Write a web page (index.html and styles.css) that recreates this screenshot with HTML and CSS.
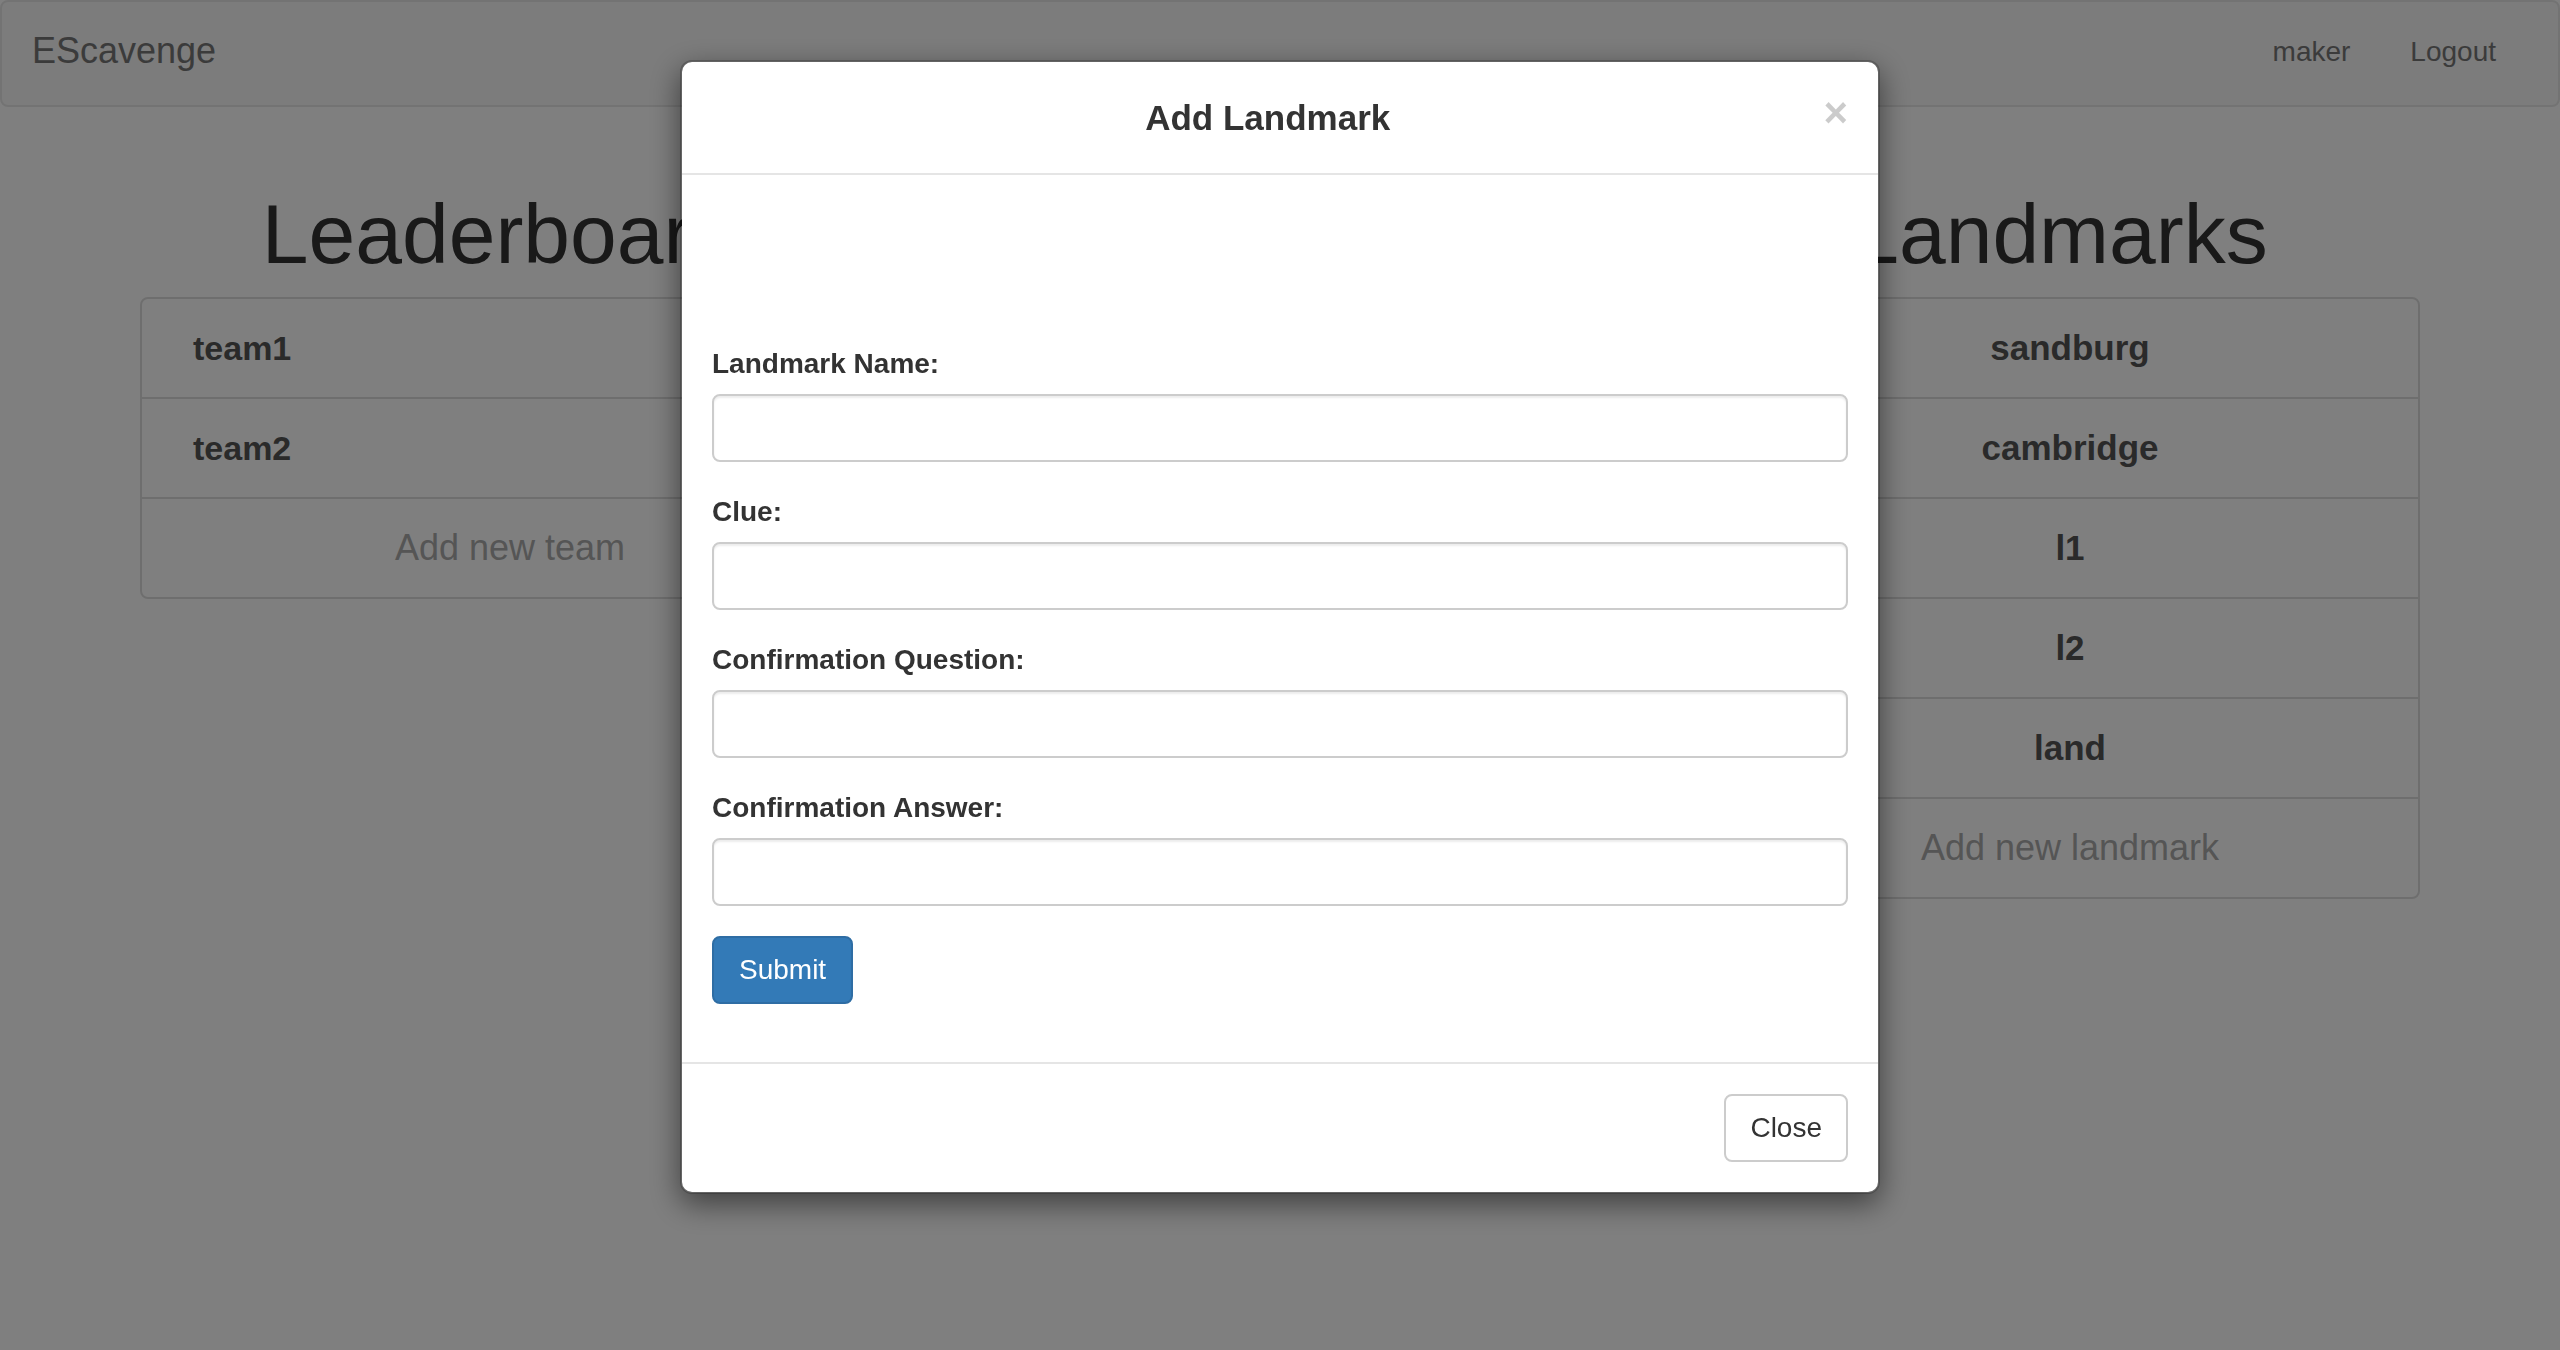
FILE: index.html
```html
<!DOCTYPE html>
<html lang="en">
<head>
<meta charset="utf-8">
<title>EScavenge</title>
<link rel="stylesheet" href="styles.css">
</head>
<body>
<nav class="navbar">
  <div class="brand">EScavenge</div>
  <ul class="nav-right">
    <li class="nav-link">maker</li>
    <li class="nav-link">Logout</li>
  </ul>
</nav>

<div class="container">
  <section class="col col-left">
    <h1 class="heading">Leaderboard</h1>
    <div class="list">
      <div class="item item-team">team1</div>
      <div class="item item-team">team2</div>
      <div class="item item-add">Add new team</div>
    </div>
  </section>
  <section class="col col-right">
    <h1 class="heading">Landmarks</h1>
    <div class="list">
      <div class="item item-land">sandburg</div>
      <div class="item item-land">cambridge</div>
      <div class="item item-land">l1</div>
      <div class="item item-land">l2</div>
      <div class="item item-land">land</div>
      <div class="item item-add">Add new landmark</div>
    </div>
  </section>
</div>

<div class="backdrop"></div>

<div class="modal-wrap">
  <div class="modal">
    <div class="modal-header">
      <span class="close">&times;</span>
      <h4 class="modal-title">Add Landmark</h4>
    </div>
    <div class="modal-body">
      <div class="spacer"></div>
      <form class="form">
        <div class="form-group">
          <label class="label">Landmark Name:</label>
          <input class="input" type="text">
        </div>
        <div class="form-group">
          <label class="label">Clue:</label>
          <input class="input" type="text">
        </div>
        <div class="form-group">
          <label class="label">Confirmation Question:</label>
          <input class="input" type="text">
        </div>
        <div class="form-group">
          <label class="label">Confirmation Answer:</label>
          <input class="input" type="text">
        </div>
        <button class="btn btn-primary" type="button">Submit</button>
      </form>
    </div>
    <div class="modal-footer">
      <button class="btn btn-default" type="button">Close</button>
    </div>
  </div>
</div>
</body>
</html>
```

FILE: styles.css
```css
html, body {
  margin: 0;
  padding: 0;
}
body {
  font-family: "Liberation Sans", Arial, Helvetica, sans-serif;
  color: #333;
  background: #fff;
  width: 2560px;
  height: 1350px;
  overflow: hidden;
}

/* navbar */
.navbar {
  box-sizing: border-box;
  height: 107px;
  background: #f8f8f8;
  border: 2px solid #e7e7e7;
  border-radius: 8px;
  display: flex;
  justify-content: space-between;
  align-items: flex-start;
  margin-bottom: 40px;
}
.brand {
  padding: 29px 30px 0 30px;
  font-size: 36px;
  line-height: 40px;
  color: #777;
}
.nav-right {
  list-style: none;
  margin: 0 32px 0 0;
  padding: 0;
  display: flex;
}
.nav-link {
  padding: 30px 30px 0 30px;
  font-size: 28px;
  line-height: 40px;
  color: #777;
}

/* content */
.container {
  width: 2340px;
  margin: 0 auto;
  display: grid;
  grid-template-columns: 780px 780px 780px;
}
.col {
  padding: 0 30px;
}
.col-right {
  grid-column: 3;
}
.heading {
  margin: 41px 0 17px 0;
  font-size: 84px;
  line-height: 92px;
  font-weight: 400;
  text-align: center;
  color: #333;
}
.list {
  border: 2px solid #ddd;
  border-radius: 8px;
  background: #fff;
}
.item {
  height: 98px;
  display: flex;
  align-items: center;
  border-top: 2px solid #ddd;
  font-size: 35px;
  font-weight: 700;
  color: #555;
}
.item:first-child {
  border-top: 0;
}
.item-team {
  padding-left: 51px;
  font-size: 34px;
}
.item-land {
  justify-content: center;
  padding-left: 20px;
}
.item-add {
  justify-content: center;
  padding-left: 20px;
  font-size: 36px;
  font-weight: 400;
  color: #aaa;
}

/* overlay */
.backdrop {
  position: fixed;
  inset: 0;
  background: rgba(0, 0, 0, 0.5);
}
.modal-wrap {
  position: fixed;
  inset: 0;
  display: flex;
  justify-content: center;
  align-items: flex-start;
  padding-top: 60px;
}
.modal {
  box-sizing: border-box;
  width: 1200px;
  background: #fff;
  background-clip: padding-box;
  border: 2px solid rgba(0, 0, 0, 0.2);
  border-radius: 12px;
  box-shadow: 0 10px 30px rgba(0, 0, 0, 0.5);
}
.modal-header {
  padding: 30px;
  border-bottom: 2px solid #e5e5e5;
}
.close {
  float: right;
  font-size: 42px;
  font-weight: 700;
  line-height: 1;
  color: #000;
  opacity: 0.2;
  margin-top: 0;
}
.modal-title {
  margin: 0;
  font-size: 35px;
  line-height: 51px;
  font-weight: 700;
  text-align: center;
  color: #333;
}
.modal-body {
  padding: 30px;
}
.spacer {
  height: 139px;
}
.form {
  margin: 0;
}
.form-group {
  margin-bottom: 30px;
}
.label {
  display: block;
  font-size: 28px;
  line-height: 40px;
  font-weight: 700;
  margin-bottom: 10px;
  color: #333;
}
.input {
  display: block;
  box-sizing: border-box;
  width: 100%;
  height: 68px;
  margin: 0;
  padding: 12px 24px;
  font-family: inherit;
  font-size: 28px;
  border: 2px solid #ccc;
  border-radius: 8px;
  box-shadow: inset 0 2px 2px rgba(0, 0, 0, 0.075);
  background: #fff;
}
.btn {
  display: inline-block;
  box-sizing: border-box;
  margin: 0;
  padding: 12px 24px;
  font-family: inherit;
  font-size: 28px;
  line-height: 40px;
  border-radius: 8px;
  border: 2px solid transparent;
}
.btn-primary {
  background: #337ab7;
  border-color: #2e6da4;
  color: #fff;
  padding: 12px 25px;
  margin-bottom: 28px;
}
.btn-default {
  background: #fff;
  border-color: #ccc;
  color: #333;
}
.modal-footer {
  padding: 30px;
  border-top: 2px solid #e5e5e5;
  text-align: right;
}
.modal-footer .btn {
  vertical-align: top;
}
```
